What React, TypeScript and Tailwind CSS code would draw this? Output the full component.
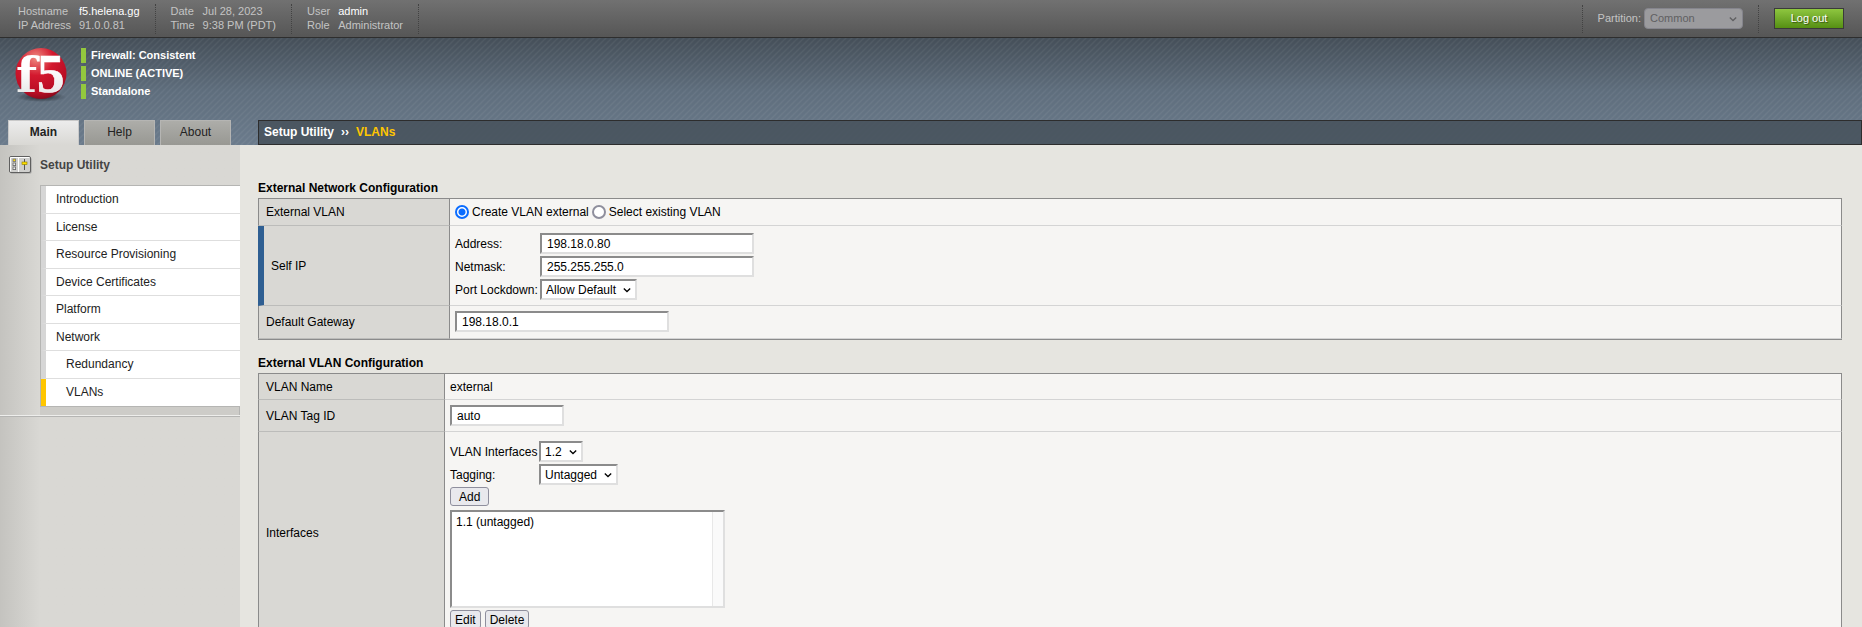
import { useId, type ReactNode } from 'react';

const inset =
  'border-2 border-t-[#8b8b8b] border-l-[#8b8b8b] border-r-[#dfdfdf] border-b-[#dfdfdf] bg-white text-black';

function Info({ rows, strong }: { rows: [string, string][]; strong?: boolean }) {
  return (
    <dl className="grid grid-cols-[auto_auto] gap-x-2 border-r border-dotted border-[#424242] pb-[2px] text-[11px] leading-[14px] text-[#c4c4c4]">
      {rows.map(([k, v], i) => (
        <div key={k} className="contents">
          <dt>{k}</dt>
          <dd className={strong && i === 0 ? 'pr-[15px] text-white' : 'pr-[15px]'}>{v}</dd>
        </div>
      ))}
    </dl>
  );
}

function Chevron() {
  return (
    <svg className="pointer-events-none absolute top-1/2 right-[6px] -mt-1 h-2 w-2" viewBox="0 0 8 8" fill="none" stroke="currentColor" strokeWidth="1.3" aria-hidden="true">
      <path d="M0.8 2.5 4 5.5 7.2 2.5" />
    </svg>
  );
}

function Select({ id, value, width }: { id: string; value: string; width: string }) {
  return (
    <span className={`relative block text-black ${width}`}>
      <select id={id} className={`block h-[21px] w-full appearance-none pl-1 text-xs leading-4 ${inset}`}>
        <option>{value}</option>
      </select>
      <Chevron />
    </span>
  );
}

function TextBox({ id, value, width }: { id: string; value: string; width: string }) {
  return <input id={id} type="text" defaultValue={value} className={`block h-[21px] px-[5px] text-xs ${inset} ${width}`} />;
}

function Button({ children, pad }: { children: ReactNode; pad: string }) {
  return (
    <button type="button" className={`h-[19px] rounded-[3px] border border-[#8f8f9d] bg-[#e9e9ed] text-xs leading-4 text-black ${pad}`}>
      {children}
    </button>
  );
}

function Row({ label, htmlFor, marked, children, width, pad }: {
  label: string; htmlFor?: string; marked?: boolean; children: ReactNode; width: string; pad: string;
}) {
  return (
    <tr>
      <th
        scope="row"
        className={`border-r border-r-[#8b8b8b] border-b border-b-[#bcbcba] bg-[#d9d8d4] pl-[7px] text-left align-middle font-normal ${width} ${
          marked ? 'border-l-[6px] border-l-[#2f5f92]' : 'border-l border-l-[#8b8b8b]'
        }`}
      >
        {htmlFor ? <label htmlFor={htmlFor}>{label}</label> : label}
      </th>
      <td className={`border-r border-r-[#8b8b8b] border-b border-b-[#d4d4d4] bg-[#f6f5f3] pl-[5px] align-middle ${pad}`}>{children}</td>
    </tr>
  );
}

function Panel({ title, children }: { title: string; children: ReactNode }) {
  return (
    <section className="mb-[15px]">
      <h2 className="h-[18px] text-xs leading-[17px] font-bold">{title}</h2>
      <table className="w-full border-separate border-spacing-0 border-t border-b border-[#8b8b8b]">
        <tbody>{children}</tbody>
      </table>
    </section>
  );
}

function Logo() {
  return (
    <svg className="h-[56px] w-[56px] shrink-0 overflow-visible" viewBox="0 0 56 56" role="img" aria-label="f5">
      <defs>
        <radialGradient id="ball" cx="0.4" cy="0.2" r="0.85">
          <stop offset="0" stopColor="#ee8a80" />
          <stop offset="0.4" stopColor="#d3182e" />
          <stop offset="0.8" stopColor="#b80d24" />
          <stop offset="1" stopColor="#7d0818" />
        </radialGradient>
        <radialGradient id="shade">
          <stop offset="0" stopColor="#1c2127" stopOpacity="0.9" />
          <stop offset="1" stopColor="#1c2127" stopOpacity="0" />
        </radialGradient>
        <linearGradient id="face" x1="0" y1="0" x2="0" y2="1">
          <stop offset="0.4" stopColor="#ffffff" />
          <stop offset="1" stopColor="#dedede" />
        </linearGradient>
      </defs>
      <ellipse cx="28" cy="49" rx="25" ry="5" fill="url(#shade)" />
      <circle cx="28" cy="25.5" r="25.5" fill="url(#ball)" />
      <text x="3" y="44" fontFamily="DejaVu Serif, serif" fontWeight="700" fontSize="49" fill="url(#face)">f</text>
      <text x="24" y="44" fontFamily="Liberation Serif, serif" fontWeight="700" fontSize="55" fill="url(#face)" stroke="#fff" strokeWidth="0.6">5</text>
    </svg>
  );
}

const menu = ['Introduction', 'License', 'Resource Provisioning', 'Device Certificates', 'Platform', 'Network', 'Redundancy', 'VLANs'];

function Stripes() {
  return (
    <svg className="pointer-events-none absolute inset-0 h-full w-full" aria-hidden="true">
      <defs>
        <pattern id="hatch" width="6" height="6" patternUnits="userSpaceOnUse">
          <path d="M-1 1 1 -1M0 6 6 0M5 7 7 5" stroke="#fff" strokeOpacity="0.05" strokeWidth="1.4" />
        </pattern>
      </defs>
      <rect width="100%" height="100%" fill="url(#hatch)" />
    </svg>
  );
}

export default function App() {
  const id = useId();
  return (
    <div className="flex h-screen flex-col overflow-hidden bg-[#e6e5e0] font-['Liberation_Sans',Arial,sans-serif] text-xs text-black">
      <header className="shrink-0">
        <div className="flex h-[38px] items-center border-b border-[#2e2e2e] bg-linear-to-b from-[#717171] to-[#565656] pr-[18px] pl-[18px]">
          <div className="flex gap-[15px]">
            <Info strong rows={[['Hostname', 'f5.helena.gg'], ['IP Address', '91.0.0.81']]} />
            <Info rows={[['Date', 'Jul 28, 2023'], ['Time', '9:38 PM (PDT)']]} />
            <Info strong rows={[['User', 'admin'], ['Role', 'Administrator']]} />
          </div>
          <div className="ml-auto flex h-7 items-center border-x border-dotted border-[#424242] px-[15px] text-[11px] text-[#c4c4c4]">
            <label htmlFor={`${id}-part`} className="mr-[3px]">Partition:</label>
            <span className="relative block text-[#606062]">
              <select id={`${id}-part`} disabled className="block h-[21px] w-[99px] appearance-none rounded-[4px] border border-[#85858d] bg-[#9b9b9e] pl-[5px] text-[11px] text-[#606062] opacity-100">
                <option>Common</option>
              </select>
              <Chevron />
            </span>
          </div>
          <button type="button" className="ml-[15px] h-[21px] w-[70px] border border-[#3a3a3a] bg-linear-to-b from-[#8ec63f] to-[#569012] text-[11px] text-white [text-shadow:1px_1px_1px_rgba(0,0,0,0.5)]">
            Log out
          </button>
        </div>
        <div className="relative h-[107px] bg-linear-to-b from-[#454f59] via-[#5f6e7d] to-[#6b7b8c]">
          <Stripes />
          <div className="relative flex h-full flex-col justify-between">
            <div className="flex pt-[10px] pl-[13px]">
              <Logo />
              <ul className="ml-3 flex flex-col gap-[3px] text-[11px] font-bold text-white">
                {['Firewall: Consistent', 'ONLINE (ACTIVE)', 'Standalone'].map((s) => (
                  <li key={s} className="flex h-[15px] border-l-[5px] border-[#93c83e] pl-[5px] leading-[14px]">{s}</li>
                ))}
              </ul>
            </div>
            <div className="flex">
              <nav className="flex w-[258px] shrink-0 gap-[5px] pl-2" aria-label="Sections">
                {['Main', 'Help', 'About'].map((t, i) => (
                  <button
                    key={t}
                    type="button"
                    className={`h-[25px] w-[71px] border border-b-0 pb-[2px] text-xs text-[#222] ${
                      i === 0 ? 'border-[#c9c9c9] bg-linear-to-b from-[#ececec] to-[#d9d8d4] font-bold' : 'border-[#b5b5b3] bg-linear-to-b from-[#adada9] to-[#989893]'
                    }`}
                  >
                    {t}
                  </button>
                ))}
              </nav>
              <div className="flex h-[25px] flex-1 items-center gap-[7px] border border-[#2d2d2d] bg-[#48535d]/90 pb-[2px] pl-[5px] font-bold text-white">
                <a href="#setup">Setup Utility</a>
                <span>››</span>
                <span className="text-[#ffc600]">VLANs</span>
              </div>
            </div>
          </div>
        </div>
      </header>
      <div className="flex min-h-0 flex-1">
        <aside className="w-[240px] shrink-0 bg-linear-to-r from-[#c4c3bf] to-[#d9d8d4] to-[40px]">
          <h1 className="flex h-10 items-center gap-2 pl-[9px] font-bold text-[#444]">
            <svg className="h-[18px] w-[23px]" viewBox="0 0 23 18" aria-hidden="true">
              <rect x="1.5" y="1.5" width="21" height="16" rx="1.5" fill="#999" />
              <rect x="0.5" y="0.5" width="21" height="16" rx="1.5" fill="#cfcfcd" stroke="#5f5f5f" />
              <path d="M1.5 15.5V1.5H20.5M9.5 1v15" stroke="#fff" fill="none" />
              <rect x="4" y="3" width="2.6" height="2.6" fill="#ffd800" stroke="#777" strokeWidth="0.8" />
              <rect x="4" y="7" width="2.6" height="2.6" fill="#eee" stroke="#666" strokeWidth="0.8" />
              <rect x="4" y="11" width="2.6" height="2.6" fill="#eee" stroke="#666" strokeWidth="0.8" />
              <path d="M15.5 3v11" stroke="#555" />
              <rect x="13" y="6" width="5" height="2.6" fill="#ffe000" stroke="#887700" strokeWidth="0.6" />
            </svg>
            Setup Utility
          </h1>
          <div className="border-b border-[#b5b5b3]">
            <div className="ml-10 border border-r-0 border-[#b5b5b3]">
              <ul className="grid h-[220px] grid-rows-8 bg-white">
                {menu.map((m, i) => (
                  <li key={m} className={`flex border-b border-[#dedede] border-l-[5px] last:border-b-0 ${i === 7 ? 'border-l-[#ffc600]' : 'border-l-[#d6d6d6]'}`}>
                    <a href={`#${m}`} className={`flex flex-1 items-center text-[#222] ${i > 5 ? 'pl-5' : 'pl-[10px]'}`}>{m}</a>
                  </li>
                ))}
              </ul>
            </div>
            <div className="ml-10 h-2 border-r border-[#b5b5b3] bg-[#cdccc8]" />
            <div className="h-px bg-[#eeeeec]" />
          </div>
        </aside>
        <main className="min-w-0 flex-1 pt-[35px] pr-5 pl-[18px]">
          <Panel title="External Network Configuration">
            <Row label="External VLAN" width="w-[192px]" pad="h-[27px]">
              <div className="flex items-center gap-[3px]">
                <input id={`${id}-create`} type="radio" name="vlan" defaultChecked className="h-[14px] w-[14px] appearance-none rounded-full border-2 border-[#0a6cff] bg-white bg-[radial-gradient(circle,#0a6cff_3px,#fff_4px)]" />
                <label htmlFor={`${id}-create`}>Create VLAN external</label>
                <input id={`${id}-exist`} type="radio" name="vlan" className="h-[14px] w-[14px] appearance-none rounded-full border-2 border-[#8f8f9d] bg-white" />
                <label htmlFor={`${id}-exist`}>Select existing VLAN</label>
              </div>
            </Row>
            <Row label="Self IP" marked width="w-[192px]" pad="pt-[7px] pb-[5px]">
              <div className="grid grid-cols-[83px_auto] items-center justify-start gap-[2px] whitespace-nowrap">
                <label htmlFor={`${id}-addr`}>Address:</label>
                <TextBox id={`${id}-addr`} value="198.18.0.80" width="w-[214px]" />
                <label htmlFor={`${id}-mask`}>Netmask:</label>
                <TextBox id={`${id}-mask`} value="255.255.255.0" width="w-[214px]" />
                <label htmlFor={`${id}-lock`}>Port Lockdown:</label>
                <Select id={`${id}-lock`} value="Allow Default" width="w-[97px]" />
              </div>
            </Row>
            <Row label="Default Gateway" htmlFor={`${id}-gw`} width="w-[192px]" pad="pt-[5px] pb-[6px]">
              <TextBox id={`${id}-gw`} value="198.18.0.1" width="w-[214px]" />
            </Row>
          </Panel>
          <Panel title="External VLAN Configuration">
            <Row label="VLAN Name" width="w-[187px]" pad="h-[26px]">external</Row>
            <Row label="VLAN Tag ID" htmlFor={`${id}-tag`} width="w-[187px]" pad="py-[5px]">
              <TextBox id={`${id}-tag`} value="auto" width="w-[114px]" />
            </Row>
            <Row label="Interfaces" width="w-[187px]" pad="pt-[9px] pb-[5px]">
              <div className="flex flex-col items-start gap-[2px]">
                <div className="grid grid-cols-[87px_auto] items-center justify-start gap-[2px] whitespace-nowrap">
                  <label htmlFor={`${id}-if`}>VLAN Interfaces</label>
                  <Select id={`${id}-if`} value="1.2" width="w-[44px]" />
                  <label htmlFor={`${id}-tg`}>Tagging:</label>
                  <Select id={`${id}-tg`} value="Untagged" width="w-[79px]" />
                </div>
                <Button pad="px-2">Add</Button>
                <div className={`mt-[2px] flex h-[98px] w-[275px] ${inset}`}>
                  <select size={5} aria-label="Interfaces" className="min-w-0 flex-1 appearance-none overflow-hidden bg-white text-xs outline-none">
                    <option className="px-1 py-[3px]">1.1 (untagged)</option>
                  </select>
                  <div className="w-[11px] border-l border-[#e8e8e8] bg-[#fafafa]" />
                </div>
                <div className="flex gap-1">
                  <Button pad="px-1">Edit</Button>
                  <Button pad="px-1">Delete</Button>
                </div>
              </div>
            </Row>
          </Panel>
        </main>
      </div>
    </div>
  );
}
